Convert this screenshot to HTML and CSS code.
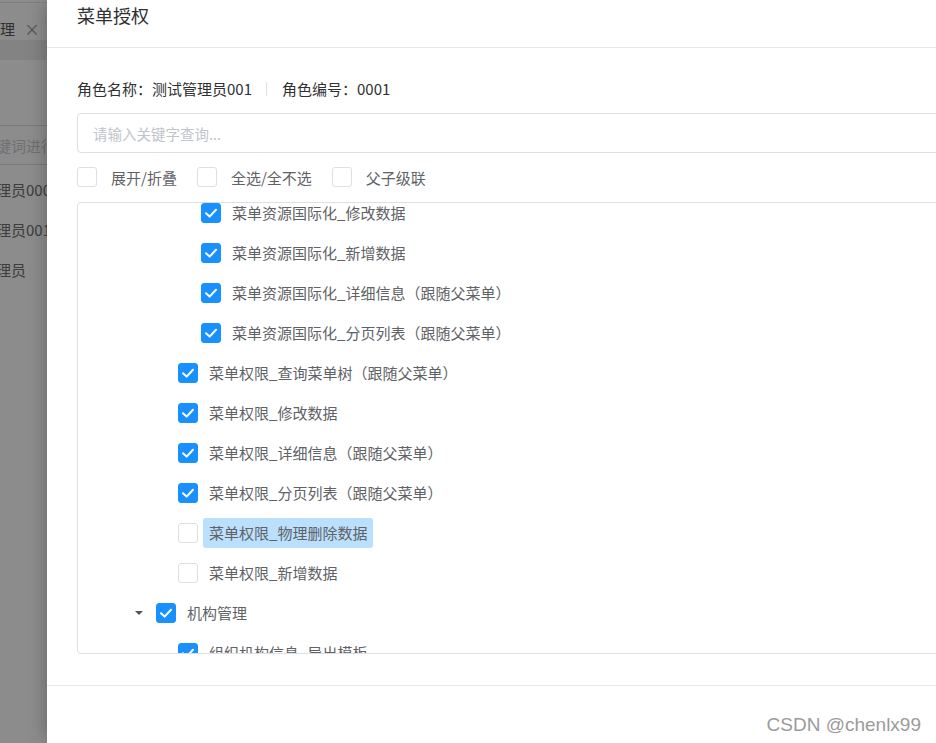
FILE: index.html
```html
<!DOCTYPE html>
<html lang="zh-CN">
<head>
<meta charset="utf-8">
<title>菜单授权</title>
<link rel="stylesheet" href="styles.css">
</head>
<body>
<div class="screen">
  <aside class="backdrop">
    <div class="bd-topline"></div>
    <div class="bd-tab"><span class="bd-tab-text">理</span><span class="bd-close">×</span></div>
    <div class="bd-band"></div>
    <div class="bd-gap"></div>
    <div class="bd-search"><span class="bd-cut">键词进行</span></div>
    <div class="bd-row"><span class="bd-cut">理员0004</span></div>
    <div class="bd-row"><span class="bd-cut">理员001</span></div>
    <div class="bd-row"><span class="bd-cut">理员</span></div>
  </aside>

  <section class="drawer">
    <header class="drawer-header">
      <h1 class="drawer-title">菜单授权</h1>
    </header>

    <div class="drawer-body">
      <div class="role-info">
        <span>角色名称：测试管理员001</span>
        <span class="divider"></span>
        <span>角色编号：0001</span>
      </div>

      <div class="search-input"><span class="placeholder">请输入关键字查询...</span></div>

      <div class="options">
        <label class="option"><span class="cb"></span><span class="option-text">展开/折叠</span></label>
        <label class="option"><span class="cb"></span><span class="option-text">全选/全不选</span></label>
        <label class="option"><span class="cb"></span><span class="option-text">父子级联</span></label>
      </div>

      <div class="tree">
        <div class="tree-list">
          <div class="node l4"><span class="switcher"></span><span class="cb on"><svg viewBox="0 0 20 20"><path d="M5 10.2 L8.6 13.6 L15 6.8"/></svg></span><span class="label">菜单资源国际化_修改数据</span></div>
          <div class="node l4"><span class="switcher"></span><span class="cb on"><svg viewBox="0 0 20 20"><path d="M5 10.2 L8.6 13.6 L15 6.8"/></svg></span><span class="label">菜单资源国际化_新增数据</span></div>
          <div class="node l4"><span class="switcher"></span><span class="cb on"><svg viewBox="0 0 20 20"><path d="M5 10.2 L8.6 13.6 L15 6.8"/></svg></span><span class="label">菜单资源国际化_详细信息（跟随父菜单）</span></div>
          <div class="node l4"><span class="switcher"></span><span class="cb on"><svg viewBox="0 0 20 20"><path d="M5 10.2 L8.6 13.6 L15 6.8"/></svg></span><span class="label">菜单资源国际化_分页列表（跟随父菜单）</span></div>
          <div class="node l3"><span class="switcher"></span><span class="cb on"><svg viewBox="0 0 20 20"><path d="M5 10.2 L8.6 13.6 L15 6.8"/></svg></span><span class="label">菜单权限_查询菜单树（跟随父菜单）</span></div>
          <div class="node l3"><span class="switcher"></span><span class="cb on"><svg viewBox="0 0 20 20"><path d="M5 10.2 L8.6 13.6 L15 6.8"/></svg></span><span class="label">菜单权限_修改数据</span></div>
          <div class="node l3"><span class="switcher"></span><span class="cb on"><svg viewBox="0 0 20 20"><path d="M5 10.2 L8.6 13.6 L15 6.8"/></svg></span><span class="label">菜单权限_详细信息（跟随父菜单）</span></div>
          <div class="node l3"><span class="switcher"></span><span class="cb on"><svg viewBox="0 0 20 20"><path d="M5 10.2 L8.6 13.6 L15 6.8"/></svg></span><span class="label">菜单权限_分页列表（跟随父菜单）</span></div>
          <div class="node l3"><span class="switcher"></span><span class="cb"></span><span class="label selected">菜单权限_物理删除数据</span></div>
          <div class="node l3"><span class="switcher"></span><span class="cb"></span><span class="label">菜单权限_新增数据</span></div>
          <div class="node l2"><span class="switcher"><svg viewBox="0 0 8 4"><path d="M0 0 H8 L4 4 Z"/></svg></span><span class="cb on"><svg viewBox="0 0 20 20"><path d="M5 10.2 L8.6 13.6 L15 6.8"/></svg></span><span class="label">机构管理</span></div>
          <div class="node l3"><span class="switcher"></span><span class="cb on"><svg viewBox="0 0 20 20"><path d="M5 10.2 L8.6 13.6 L15 6.8"/></svg></span><span class="label">组织机构信息_导出模板</span></div>
        </div>
      </div>
    </div>

    <footer class="drawer-footer">
      <span class="watermark">CSDN @chenlx99</span>
    </footer>
  </section>
</div>
</body>
</html>
```

FILE: styles.css
```css
* { box-sizing: border-box; }

html, body {
  margin: 0;
  padding: 0;
  height: 100%;
}

body {
  font-family: "Noto Sans CJK SC", "Liberation Sans", sans-serif;
  font-size: 15px;
  color: #606266;
  background: #fff;
}

.screen {
  display: flex;
  width: 936px;
  height: 743px;
  overflow: hidden;
}

/* ---------- dimmed page behind the drawer ---------- */
.backdrop {
  width: 47px;
  flex: none;
  background: #8c8c8c;
  overflow: hidden;
  display: flex;
  flex-direction: column;
  color: #3b3b3b;
}

.bd-topline {
  height: 3px;
  border-bottom: 1px solid #7e7e7e;
}

.bd-tab {
  height: 37px;
  display: flex;
  align-items: center;
  white-space: nowrap;
  padding-top: 14px;
}

.bd-tab-text {
  margin-left: 0;
  font-size: 15px;
  color: #2f2f2f;
}

.bd-close {
  margin-left: 9px;
  font-family: "DejaVu Sans", sans-serif;
  font-size: 19px;
  font-weight: 200;
  color: #4a4a4a;
}

.bd-band {
  height: 20px;
  background: #838383;
}

.bd-gap {
  height: 66px;
  border-bottom: 1px solid #7b7b7b;
}

.bd-search {
  height: 39px;
  display: flex;
  align-items: center;
  border-bottom: 1px solid #7b7b7b;
  color: #6e6f72;
  white-space: nowrap;
}

.bd-row {
  height: 40px;
  display: flex;
  align-items: center;
  white-space: nowrap;
  color: #3c3d3f;
}

.bd-search + .bd-row { height: 44px; padding-top: 4px; }

.bd-cut {
  margin-left: -4px;
}

/* ---------- drawer ---------- */
.drawer {
  flex: 1;
  min-width: 0;
  background: #fff;
  display: flex;
  flex-direction: column;
  overflow: hidden;
  box-shadow: -6px 0 16px -4px rgba(0, 0, 0, 0.25);
  position: relative;
}

.drawer-header {
  height: 48px;
  flex: none;
  border-bottom: 1px solid #e8e8e8;
  padding: 3px 30px 0;
}

.drawer-title {
  margin: 0;
  font-size: 18px;
  font-weight: 400;
  line-height: 24px;
  color: #303133;
}

.drawer-body {
  flex: 1;
  padding: 30px 0 0 30px;
  width: 960px;
}

.role-info {
  display: flex;
  align-items: center;
  height: 22px;
  line-height: 22px;
  color: #303133;
}

.divider {
  width: 1px;
  height: 14px;
  background: #dcdfe6;
  margin: 0 15px 0 14px;
}

.search-input {
  margin-top: 13px;
  height: 40px;
  border: 1px solid #dcdfe6;
  border-radius: 4px;
  display: flex;
  align-items: center;
  padding-left: 15px;
}

.placeholder {
  color: #c0c4cc;
  font-size: 14.5px;
}

.options {
  margin-top: 12px;
  height: 24px;
  display: flex;
  align-items: center;
}

.option {
  display: flex;
  align-items: center;
  margin-right: 20px;
}

.option-text {
  margin-left: 14px;
  color: #606266;
}

.cb {
  width: 20px;
  height: 20px;
  flex: none;
  border: 1px solid #dcdfe6;
  border-radius: 3px;
  background: #fff;
  display: inline-flex;
  align-items: center;
  justify-content: center;
}

.cb.on {
  background: #1890ff;
  border-color: #1890ff;
}

.cb svg {
  width: 20px;
  height: 20px;
  fill: none;
  stroke: #fff;
  stroke-width: 2;
  stroke-linecap: round;
  stroke-linejoin: round;
  margin: -1px;
}

.tree {
  margin-top: 13px;
  height: 452px;
  border: 1px solid #dcdfe6;
  border-radius: 4px;
  overflow: hidden;
}

.tree-list {
  margin-top: -10px;
}

.node {
  height: 40px;
  display: flex;
  align-items: center;
  white-space: nowrap;
}

.node.l2 { padding-left: 52px; }
.node.l3 { padding-left: 74px; }
.node.l4 { padding-left: 97px; }

.switcher {
  width: 18px;
  margin-right: 8px;
  flex: none;
  display: flex;
  align-items: center;
  justify-content: center;
}

.switcher svg {
  width: 8px;
  height: 4px;
  fill: #555;
}

.label {
  margin-left: 5px;
  padding: 0 6px;
  height: 30px;
  line-height: 30px;
  border-radius: 3px;
  color: #606266;
}

.label.selected {
  background: #bae0fd;
}

.drawer-footer {
  height: 58px;
  flex: none;
  border-top: 1px solid #e8e8e8;
  display: flex;
  align-items: flex-end;
  justify-content: flex-end;
  padding: 0 15px 6px 0;
}

.watermark {
  font-family: "Liberation Sans", Arial, sans-serif;
  font-size: 19px;
  color: #9b9b9b;
  line-height: 24px;
}
```
